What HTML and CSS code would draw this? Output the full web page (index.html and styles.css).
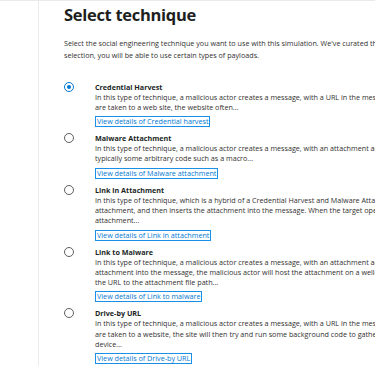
FILE: index.html
```html
<!DOCTYPE html>
<html lang="en">
<head>
    <meta charset="UTF-8">
    <meta name="viewport" content="width=device-width, initial-scale=1.0">
    <title>Select technique</title>
    <link rel="stylesheet" href="styles.css">
</head>
<body>
    <div class="page">
        <div class="side-nav"></div>

        <div class="main">
            <h1>Select technique</h1>
            <p class="intro">Select the social engineering technique you want to use with this simulation. We've curated the techniques for you. Depending on your<br>selection, you will be able to use certain types of payloads.</p>

            <div class="options">
                <!-- Credential Harvest -->
                <label class="option">
                    <span class="radio checked"></span>
                    <span class="option-body">
                        <span class="option-title">Credential Harvest</span>
                        <span class="option-desc">In this type of technique, a malicious actor creates a message, with a URL in the message. When the target clicks on the URL, they<br>are taken to a web site, the website often...</span>
                        <a class="details-link" href="#">View details of Credential harvest</a>
                    </span>
                </label>

                <!-- Malware Attachment -->
                <label class="option">
                    <span class="radio"></span>
                    <span class="option-body">
                        <span class="option-title">Malware Attachment</span>
                        <span class="option-desc">In this type of technique, a malicious actor creates a message, with an attachment added to the message. The attachment contains<br>typically some arbitrary code such as a macro...</span>
                        <a class="details-link" href="#">View details of Malware attachment</a>
                    </span>
                </label>

                <!-- Link in Attachment -->
                <label class="option">
                    <span class="radio"></span>
                    <span class="option-body">
                        <span class="option-title">Link in Attachment</span>
                        <span class="option-desc">In this type of technique, which is a hybrid of a Credential Harvest and Malware Attachment, a malicious actor creates a message with<br>attachment, and then inserts the attachment into the message. When the target opens the<br>attachment...</span>
                        <a class="details-link" href="#">View details of Link in attachment</a>
                    </span>
                </label>

                <!-- Link to Malware -->
                <label class="option">
                    <span class="radio"></span>
                    <span class="option-body">
                        <span class="option-title">Link to Malware</span>
                        <span class="option-desc">In this type of technique, a malicious actor creates a message, with an attachment added to the message. Instead of inserting the<br>attachment into the message, the malicious actor will host the attachment on a well-known file sharing site<br>the URL to the attachment file path...</span>
                        <a class="details-link" href="#">View details of Link to malware</a>
                    </span>
                </label>

                <!-- Drive-by URL -->
                <label class="option">
                    <span class="radio"></span>
                    <span class="option-body">
                        <span class="option-title">Drive-by URL</span>
                        <span class="option-desc">In this type of technique, a malicious actor creates a message, with a URL in the message. When the target clicks on the URL, they<br>are taken to a website, the site will then try and run some background code to gather information about the<br>device...</span>
                        <a class="details-link" href="#">View details of Drive-by URL</a>
                    </span>
                </label>
            </div>
        </div>
    </div>
</body>
</html>
```

FILE: styles.css
```css
body {
    margin: 0;
    overflow: hidden;
    font-family: "Open Sans", "Noto Sans", Arial, sans-serif;
    color: #323130;
    background-color: #fff;
}
.page {
    display: flex;
    min-height: 366px;
    border-top: 1px solid #edebe9;
}
.side-nav {
    flex: 0 0 38px;
    border-right: 1px solid #edebe9;
}
.main {
    flex: 0 0 auto;
    padding: 4px 0 0 25px;
}
h1 {
    margin: 0;
    font-size: 16.5px;
    font-weight: 700;
    line-height: 20px;
    letter-spacing: -0.3px;
    color: #201f1e;
}
.intro {
    margin: 11.5px 0 0;
    font-size: 7.2px;
    line-height: 12px;
    white-space: nowrap;
}
.options {
    display: flex;
    flex-direction: column;
    gap: 6px;
    margin-top: 21px;
}
.option {
    display: flex;
    align-items: flex-start;
}
.radio {
    flex: 0 0 auto;
    width: 8px;
    height: 8px;
    margin: 0 21px 0 0;
    border: 1px solid #605e5c;
    border-radius: 50%;
    position: relative;
}
.radio.checked {
    border-color: #0078d4;
}
.radio.checked::after {
    content: "";
    position: absolute;
    left: 2px;
    top: 2px;
    width: 4px;
    height: 4px;
    border-radius: 50%;
    background-color: #0078d4;
}
.option-body {
    display: flex;
    flex-direction: column;
    align-items: flex-start;
}
.option-title {
    font-size: 7.2px;
    font-weight: 700;
    line-height: 10px;
    color: #201f1e;
}
.option-desc {
    font-size: 7.2px;
    line-height: 10.3px;
    white-space: nowrap;
}
.details-link {
    margin-top: 4px;
    padding: 0 1px;
    font-size: 7.2px;
    line-height: 9px;
    color: #0078d4;
    text-decoration: none;
    border: 1px solid #1a8fe8;
}
```
